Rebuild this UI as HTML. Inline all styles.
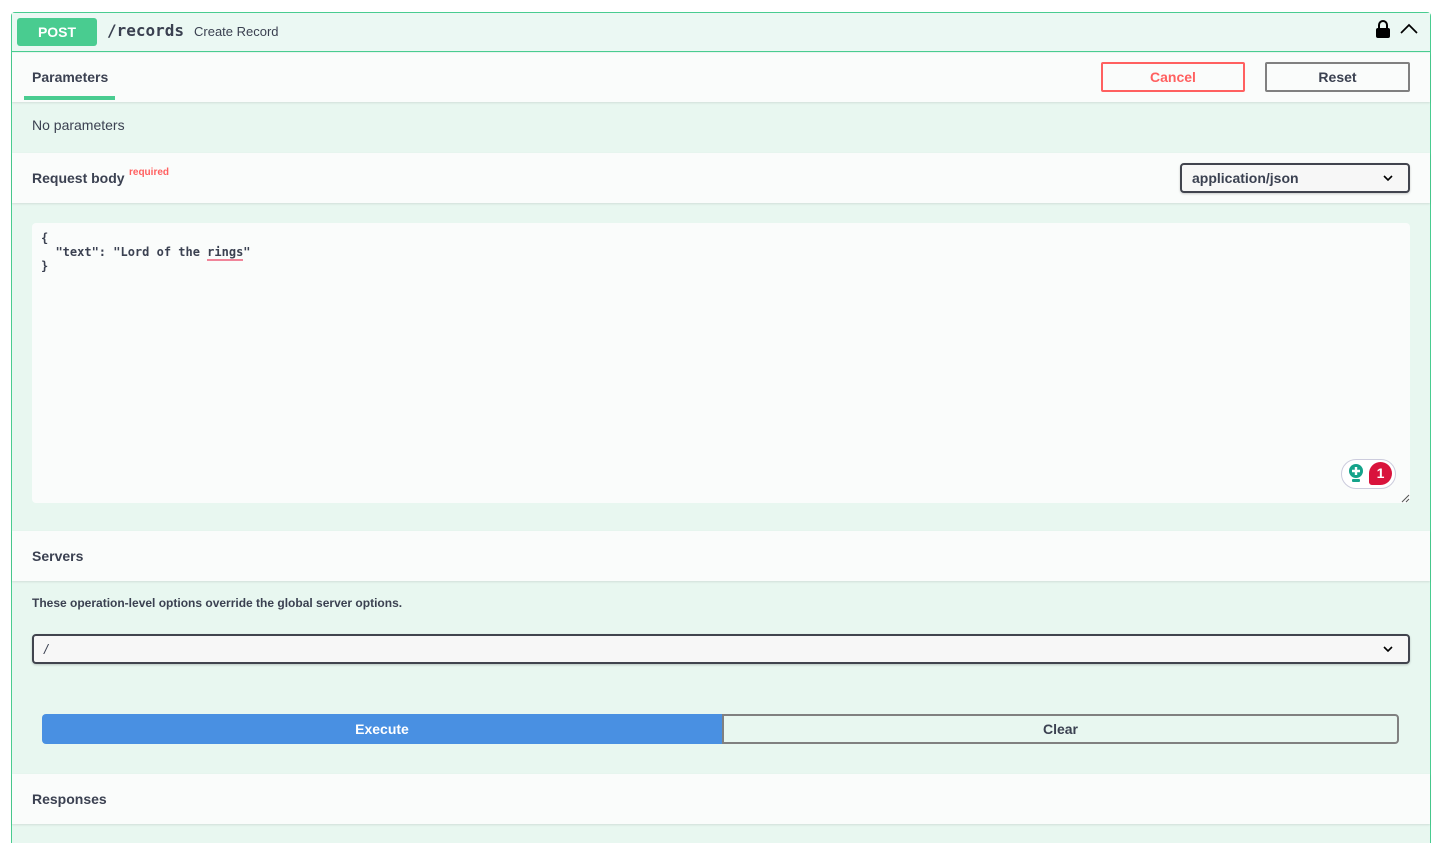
<!DOCTYPE html>
<html style="overflow:hidden;height:843px"><head><style>
*{box-sizing:border-box;margin:0;padding:0}
body{width:1436px;height:843px;background:#fff;font-family:"Liberation Sans",sans-serif;color:#3b4151;position:relative;overflow:hidden}
.a{position:absolute}
.box{left:11px;top:12px;width:1420px;height:831px;border:1px solid #49cc90;border-bottom:none;border-radius:4px 4px 0 0;background:#e8f7f0;overflow:hidden}
.w{background:#fafcfb;box-shadow:0 1px 2px rgba(0,0,0,.1)}
.b{font-weight:bold;font-size:14px}
</style></head><body>
<div class="a box"></div>
<div class="a" style="left:12px;top:13px;width:1418px;height:39px;border-bottom:1px solid #49cc90;background:#ebf8f3"></div>
<div class="a" style="left:17px;top:18px;width:80px;height:28px;background:#49cc90;border-radius:3px;color:#fff;font-weight:bold;font-size:14px;text-align:center;line-height:28px">POST</div>
<div class="a" style="left:107px;top:21px;font-family:'DejaVu Sans Mono','Liberation Mono',monospace;font-weight:bold;font-size:16px">/records</div>
<div class="a" style="left:194px;top:24px;font-size:13px">Create Record</div>
<svg class="a" style="left:1376px;top:20px" width="14" height="18" viewBox="0 0 14 18"><path d="M3 8V5a4 4 0 0 1 8 0v3" fill="none" stroke="#000" stroke-width="2"/><rect x="0" y="8" width="14" height="10" rx="2"/></svg>
<svg class="a" style="left:1400px;top:23px" width="18" height="12" viewBox="0 0 18 12"><path d="M1 10L9 2l8 8" fill="none" stroke="#000" stroke-width="1.7"/></svg>

<div class="a w" style="left:12px;top:53px;width:1418px;height:49px"></div>
<div class="a b" style="left:32px;top:69px">Parameters</div>
<div class="a" style="left:24px;top:96px;width:91px;height:4px;background:#49cc90"></div>
<div class="a" style="left:1101px;top:62px;width:144px;height:30px;border:2px solid #ff6060;border-radius:2px;color:#ff6060;font-weight:bold;font-size:14px;text-align:center;line-height:26px">Cancel</div>
<div class="a" style="left:1265px;top:62px;width:145px;height:30px;border:2px solid #808080;border-radius:2px;font-weight:bold;font-size:14px;text-align:center;line-height:26px">Reset</div>
<div class="a" style="left:32px;top:117px;font-size:14px">No parameters</div>

<div class="a w" style="left:12px;top:153px;width:1418px;height:50px"></div>
<div class="a b" style="left:32px;top:170px">Request body</div>
<div class="a" style="left:129px;top:167px;font-size:10px;font-weight:bold;color:#ff6060">required</div>
<div class="a" style="left:1180px;top:163px;width:230px;height:30px;border:2px solid #41444e;border-radius:4px;background:#f7f7f7;font-weight:bold;font-size:14px;padding:5px 10px;box-shadow:0 1px 2px rgba(0,0,0,.2)">application/json</div>
<svg class="a" style="left:1383px;top:174px" width="10" height="8"><path d="M1 2l4 4 4-4" fill="none" stroke="#000" stroke-width="1.6"/></svg>

<div class="a" style="left:32px;top:223px;width:1378px;height:280px;background:#fafcfb;border-radius:4px"></div>
<pre class="a" style="left:41px;top:231px;font-family:'DejaVu Sans Mono','Liberation Mono',monospace;font-weight:bold;font-size:12px;line-height:14px;color:#3b4151">{
  "text": "Lord of the <span style="border-bottom:2px solid #f0859a">rings</span>"
}</pre>
<div class="a" style="left:1341px;top:459px;width:55px;height:30px;border:1px solid #ccd;border-radius:15px;background:#fff"></div>
<svg class="a" style="left:1347px;top:463px" width="18" height="22" viewBox="0 0 18 22"><circle cx="9" cy="8" r="7" fill="#15a38a"/><path d="M9 4v8M5 8h8" stroke="#fff" stroke-width="2.4"/><rect x="5" y="16" width="8" height="3" rx="1" fill="#15a38a"/></svg>
<div class="a" style="left:1369px;top:462px;width:23px;height:23px;border-radius:12px 12px 12px 3px;background:#d9133c;color:#fff;font-weight:bold;font-size:14px;text-align:center;line-height:23px">1</div>
<svg class="a" style="left:1401px;top:494px" width="9" height="9"><path d="M1 8L8 1M5 8L8 5" stroke="#555" stroke-width="1"/></svg>

<div class="a w" style="left:12px;top:531px;width:1418px;height:50px"></div>
<div class="a b" style="left:32px;top:548px">Servers</div>
<div class="a" style="left:32px;top:596px;font-size:12px;font-weight:bold">These operation-level options override the global server options.</div>
<div class="a" style="left:32px;top:634px;width:1378px;height:30px;border:2px solid #41444e;border-radius:4px;background:#f7f7f7;font-size:14px;font-style:italic;padding:5px 10px;box-shadow:0 1px 2px rgba(0,0,0,.2)">/</div>
<svg class="a" style="left:1383px;top:645px" width="10" height="8"><path d="M1 2l4 4 4-4" fill="none" stroke="#000" stroke-width="1.6"/></svg>

<div class="a" style="left:42px;top:714px;width:680px;height:30px;background:#4990e2;border-radius:4px 0 0 4px;color:#fff;font-weight:bold;font-size:14px;text-align:center;line-height:30px">Execute</div>
<div class="a" style="left:722px;top:714px;width:677px;height:30px;border:2px solid #808080;border-radius:0 4px 4px 0;font-weight:bold;font-size:14px;text-align:center;line-height:26px">Clear</div>

<div class="a w" style="left:12px;top:774px;width:1418px;height:50px"></div>
<div class="a b" style="left:32px;top:791px">Responses</div>
</body></html>
